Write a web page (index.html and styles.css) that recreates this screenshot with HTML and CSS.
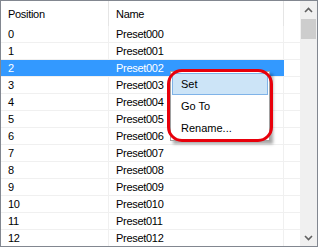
FILE: index.html
```html
<!DOCTYPE html>
<html lang="en">
<head>
   <meta charset="UTF-8">
   <title>Presets</title>
   <link rel="stylesheet" href="styles.css">
</head>
<body>
   <div class="listview">
      <div class="table">
         <div class="row header">
            <div class="cell">Position</div>
            <div class="cell">Name</div>
            <div class="cell filler"></div>
         </div>
         <div class="row"><div class="cell">0</div><div class="cell">Preset000</div><div class="cell filler"></div></div>
         <div class="row"><div class="cell">1</div><div class="cell">Preset001</div><div class="cell filler"></div></div>
         <div class="row selected"><div class="cell">2</div><div class="cell">Preset002</div><div class="cell filler"></div></div>
         <div class="row"><div class="cell">3</div><div class="cell">Preset003</div><div class="cell filler"></div></div>
         <div class="row"><div class="cell">4</div><div class="cell">Preset004</div><div class="cell filler"></div></div>
         <div class="row"><div class="cell">5</div><div class="cell">Preset005</div><div class="cell filler"></div></div>
         <div class="row"><div class="cell">6</div><div class="cell">Preset006</div><div class="cell filler"></div></div>
         <div class="row"><div class="cell">7</div><div class="cell">Preset007</div><div class="cell filler"></div></div>
         <div class="row"><div class="cell">8</div><div class="cell">Preset008</div><div class="cell filler"></div></div>
         <div class="row"><div class="cell">9</div><div class="cell">Preset009</div><div class="cell filler"></div></div>
         <div class="row"><div class="cell">10</div><div class="cell">Preset010</div><div class="cell filler"></div></div>
         <div class="row"><div class="cell">11</div><div class="cell">Preset011</div><div class="cell filler"></div></div>
         <div class="row"><div class="cell">12</div><div class="cell">Preset012</div><div class="cell filler"></div></div>
      </div>
      <div class="scrollbar">
         <div class="arrow">
            <svg width="9" height="6" viewBox="0 0 9 6"><polyline points="1,5 4.5,1.5 8,5" fill="none" stroke="#606060" stroke-width="1.6"/></svg>
         </div>
         <div class="track"><div class="thumb"></div></div>
         <div class="arrow">
            <svg width="9" height="6" viewBox="0 0 9 6"><polyline points="1,1 4.5,4.5 8,1" fill="none" stroke="#606060" stroke-width="1.6"/></svg>
         </div>
      </div>

      <!-- context menu -->
      <div class="menu">
         <div class="menu-item active">Set</div>
         <div class="menu-item">Go To</div>
         <div class="menu-item">Rename...</div>
      </div>
      <div class="callout"></div>
   </div>
</body>
</html>
```

FILE: styles.css
```css
body {
   margin: 0;
   font-family: 'Liberation Sans', Arial, sans-serif;
   font-size: 11px;
   color: #000;
   background: #fff;
}
.listview {
   position: relative;
   width: 318px;
   height: 247px;
   box-sizing: border-box;
   border: 1px solid #828790;
   display: flex;
   overflow: hidden;
}
.table {
   flex: 1;
   overflow: hidden;
}
.row {
   display: grid;
   grid-template-columns: 108px 175px 16px;
   height: 17px;
   box-sizing: border-box;
   border-bottom: 1px solid #f0f0f0;
}
.cell {
   padding-left: 7px;
   line-height: 16px;
   letter-spacing: -0.3px;
   border-right: 1px solid #f0f0f0;
   white-space: nowrap;
}
.cell.filler {
   border-right: none;
}
.header {
   height: 25px;
   border-bottom: none;
}
.header .cell {
   line-height: 26px;
   border-right-color: #e5e5e5;
}
.header .cell.filler {
   border-right: none;
}
.selected .cell {
   background-color: #3399ff;
   color: #fff;
   border-right-color: #3399ff;
}
.selected .cell.filler {
   background: #fff;
}
.scrollbar {
   width: 17px;
   background-color: #f0f0f0;
   display: flex;
   flex-direction: column;
}
.arrow {
   height: 17px;
   display: flex;
   align-items: center;
   justify-content: center;
}
.track {
   flex: 1;
   padding: 0 1px;
}
.thumb {
   height: 20px;
   margin-top: 1px;
   background-color: #cdcdcd;
}

/* Context menu */
.menu {
   position: absolute;
   left: 169px;
   top: 70px;
   width: 100px;
   box-sizing: border-box;
   padding: 1px;
   background-color: #fff;
   border: 1px solid #a0a0a0;
   box-shadow: 3px 3px 3px rgba(0, 0, 0, 0.35);
}
.menu-item {
   height: 22px;
   line-height: 22px;
   padding-left: 9px;
   box-sizing: border-box;
   font-size: 11px;
}
.menu-item.active {
   background-color: #cce4f7;
   border: 1px solid #7fb3e8;
   line-height: 20px;
   padding-left: 8px;
}
.callout {
   position: absolute;
   left: 166px;
   top: 68px;
   width: 106px;
   height: 73px;
   box-sizing: border-box;
   border: 3px solid #e8000b;
   border-radius: 15px;
}
```
